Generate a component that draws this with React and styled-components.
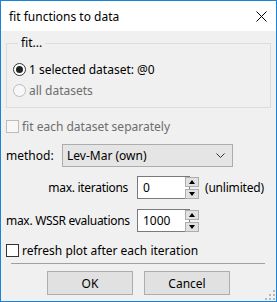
import React from 'react';
import styled, { createGlobalStyle } from 'styled-components';

const GlobalStyle = createGlobalStyle`
  html, body {
    margin: 0;
    padding: 0;
    background: #f0f0f0;
  }
  * {
    box-sizing: border-box;
  }
`;

const Window = styled.div`
  position: relative;
  width: 277px;
  height: 302px;
  border: 1px solid #1883d7;
  background: #f0f0f0;
  font-family: 'Noto Sans', 'Open Sans', sans-serif;
  font-size: 12px;
  color: #000;
  display: flex;
  flex-direction: column;
`;

const TitleBar = styled.div`
  height: 30px;
  background: #fff;
  display: flex;
  align-items: center;
  justify-content: space-between;
  padding: 1px 9px 0 8px;
  font-size: 12px;
`;

const Body = styled.div`
  flex: 1;
  padding: 5px 5px 0 5px;
  display: flex;
  flex-direction: column;
`;

const GroupBox = styled.fieldset`
  margin: 0;
  padding: 9px 0 6px 6px;
  border: 1px solid #dcdcdc;
  width: 265px;
  display: flex;
  flex-direction: column;

  legend {
    margin-left: 5px;
    padding: 0 3px;
    font-size: 12px;
    line-height: 14px;
  }
`;

const OptionRow = styled.label`
  display: flex;
  align-items: center;
  gap: 3px;
  height: ${({ h }) => h || 21}px;
  margin-top: ${({ mt }) => mt || 0}px;
  color: ${({ disabled }) => (disabled ? '#6d6d6d' : '#000')};
  white-space: nowrap;
`;

const Radio = styled.span`
  width: 13px;
  height: 13px;
  border-radius: 50%;
  border: 1px solid ${({ disabled }) => (disabled ? '#bcbcbc' : '#333')};
  background: ${({ disabled }) => (disabled ? '#f7f7f7' : '#fff')};
  display: flex;
  align-items: center;
  justify-content: center;
  flex: none;

  &::after {
    content: '';
    display: ${({ checked }) => (checked ? 'block' : 'none')};
    width: 7px;
    height: 7px;
    border-radius: 50%;
    background: #222;
  }
`;

const Check = styled.span`
  width: 13px;
  height: 13px;
  border: 1px solid ${({ disabled }) => (disabled ? '#bcbcbc' : '#333')};
  background: ${({ disabled }) => (disabled ? '#f7f7f7' : '#fff')};
  flex: none;
`;

const MethodRow = styled.div`
  display: flex;
  align-items: center;
  height: 22px;
  margin-top: 11px;
`;

const MethodLabel = styled.span`
  width: 56px;
`;

const Combo = styled.div`
  width: 171px;
  height: 23px;
  border: 1px solid #acacac;
  background: #e5e5e5;
  display: flex;
  align-items: center;
  justify-content: space-between;
  padding: 0 7px 0 4px;
`;

const SpinGrid = styled.div`
  display: grid;
  grid-template-columns: 122px 52px 14px auto;
  grid-auto-rows: 23px;
  column-gap: 0;
  row-gap: 10px;
  margin-top: 10px;
  align-items: center;
`;

const SpinLabel = styled.span`
  text-align: right;
  white-space: nowrap;
  letter-spacing: -0.3px;
`;

const SpinInput = styled.div`
  margin-left: 9px;
  width: 53px;
  height: 23px;
  border: 1px solid #7a7a7a;
  background: #fff;
  display: flex;
  align-items: center;
  padding-left: 5px;
`;

const SpinButtons = styled.div`
  margin-left: 5px;
  width: 14px;
  height: 22px;
  display: flex;
  flex-direction: column;
  justify-content: space-between;
`;

const SpinButton = styled.div`
  height: 10px;
  border: 1px solid #adadad;
  background: #e1e1e1;
  display: flex;
  align-items: center;
  justify-content: center;

  &::after {
    content: '';
    width: 0;
    height: 0;
    border-left: 3.5px solid transparent;
    border-right: 3.5px solid transparent;
    ${({ down }) =>
      down ? 'border-top: 4px solid #000;' : 'border-bottom: 4px solid #000;'}
  }
`;

const Hint = styled.span`
  margin-left: 11px;
  white-space: nowrap;
  letter-spacing: -0.2px;
`;

const Separator = styled.div`
  height: 1px;
  margin: 6px 6px 0 5px;
  background: #a0a0a0;
`;

const ButtonRow = styled.div`
  display: flex;
  justify-content: center;
  gap: 11px;
  margin-top: 7px;
`;

const Button = styled.button`
  width: 86px;
  height: 24px;
  border: 1px solid #adadad;
  background: #e1e1e1;
  font-family: inherit;
  font-size: 12px;
  color: #000;
  padding: 0;
`;

const Grip = styled.svg`
  position: absolute;
  right: 1px;
  bottom: 1px;
`;

const CloseIcon = () => (
  <svg width="11" height="11" viewBox="0 0 11 11">
    <path d="M0.5 0.5 L10.5 10.5 M10.5 0.5 L0.5 10.5" stroke="#000" strokeWidth="1" fill="none" />
  </svg>
);

const Chevron = () => (
  <svg width="9" height="5" viewBox="0 0 9 5">
    <path d="M0.5 0.5 L4.5 4.5 L8.5 0.5" stroke="#333" strokeWidth="1" fill="none" />
  </svg>
);

const SpinBox = ({ value }) => (
  <>
    <SpinInput>{value}</SpinInput>
    <SpinButtons>
      <SpinButton />
      <SpinButton down />
    </SpinButtons>
  </>
);

export default function App() {
  const gripDots = [
    [8, 0], [8, 4], [4, 4], [8, 8], [4, 8], [0, 8],
  ];
  return (
    <>
      <GlobalStyle />
      <Window>
        <TitleBar>
          <span>fit functions to data</span>
          <CloseIcon />
        </TitleBar>
        <Body>
          <GroupBox>
            <legend>fit...</legend>
            <OptionRow>
              <Radio checked />
              <span>1 selected dataset: @0</span>
            </OptionRow>
            <OptionRow disabled>
              <Radio disabled />
              <span>all datasets</span>
            </OptionRow>
          </GroupBox>
          <OptionRow disabled h={13} mt={12}>
            <Check disabled />
            <span>fit each dataset separately</span>
          </OptionRow>
          <MethodRow>
            <MethodLabel>method:</MethodLabel>
            <Combo>
              <span>Lev-Mar (own)</span>
              <Chevron />
            </Combo>
          </MethodRow>
          <SpinGrid>
            <SpinLabel>max. iterations</SpinLabel>
            <SpinBox value="0" />
            <Hint>(unlimited)</Hint>
            <SpinLabel>max. WSSR evaluations</SpinLabel>
            <SpinBox value="1000" />
            <span />
          </SpinGrid>
          <OptionRow h={13} mt={12}>
            <Check />
            <span>refresh plot after each iteration</span>
          </OptionRow>
          <Separator />
          <ButtonRow>
            <Button>OK</Button>
            <Button>Cancel</Button>
          </ButtonRow>
        </Body>
        <Grip width="10" height="10" viewBox="0 0 10 10">
          {gripDots.map(([x, y]) => (
            <rect key={`${x}-${y}`} x={x} y={y} width="2" height="2" fill="#b8b8b8" />
          ))}
        </Grip>
      </Window>
    </>
  );
}
